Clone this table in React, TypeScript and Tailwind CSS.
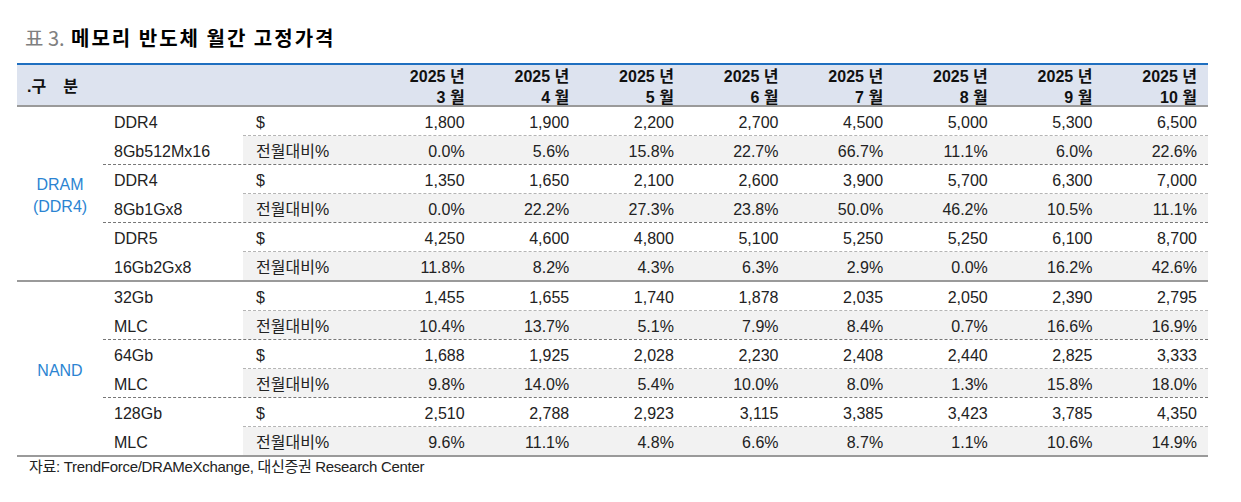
import React from 'react';

type Item = {
  name: [string, string];
  price: string[];
  change: string[];
};

type Category = {
  label: string[];
  items: Item[];
};

const months = ['3', '4', '5', '6', '7', '8', '9', '10'];

const data: Category[] = [
  {
    label: ['DRAM', '(DDR4)'],
    items: [
      {
        name: ['DDR4', '8Gb512Mx16'],
        price: ['1,800', '1,900', '2,200', '2,700', '4,500', '5,000', '5,300', '6,500'],
        change: ['0.0%', '5.6%', '15.8%', '22.7%', '66.7%', '11.1%', '6.0%', '22.6%'],
      },
      {
        name: ['DDR4', '8Gb1Gx8'],
        price: ['1,350', '1,650', '2,100', '2,600', '3,900', '5,700', '6,300', '7,000'],
        change: ['0.0%', '22.2%', '27.3%', '23.8%', '50.0%', '46.2%', '10.5%', '11.1%'],
      },
      {
        name: ['DDR5', '16Gb2Gx8'],
        price: ['4,250', '4,600', '4,800', '5,100', '5,250', '5,250', '6,100', '8,700'],
        change: ['11.8%', '8.2%', '4.3%', '6.3%', '2.9%', '0.0%', '16.2%', '42.6%'],
      },
    ],
  },
  {
    label: ['NAND'],
    items: [
      {
        name: ['32Gb', 'MLC'],
        price: ['1,455', '1,655', '1,740', '1,878', '2,035', '2,050', '2,390', '2,795'],
        change: ['10.4%', '13.7%', '5.1%', '7.9%', '8.4%', '0.7%', '16.6%', '16.9%'],
      },
      {
        name: ['64Gb', 'MLC'],
        price: ['1,688', '1,925', '2,028', '2,230', '2,408', '2,440', '2,825', '3,333'],
        change: ['9.8%', '14.0%', '5.4%', '10.0%', '8.0%', '1.3%', '15.8%', '18.0%'],
      },
      {
        name: ['128Gb', 'MLC'],
        price: ['2,510', '2,788', '2,923', '3,115', '3,385', '3,423', '3,785', '4,350'],
        change: ['9.6%', '11.1%', '4.8%', '6.6%', '8.7%', '1.1%', '10.6%', '14.9%'],
      },
    ],
  },
];

const DataRow = ({ label, values, shaded }: { label: string; values: string[]; shaded?: boolean }) => (
  <div
    className={`grid grid-cols-[128px_repeat(8,1fr)] items-center pt-[3px] ${
      shaded ? 'h-[28px] bg-[#f2f2f2]' : 'h-[29px] border-b border-dashed border-[#b5b5b5]'
    }`}
  >
    <div className="pl-[13px]">{label}</div>
    {values.map((v, i) => (
      <div key={i} className="text-right pr-[11px]">
        {v}
      </div>
    ))}
  </div>
);

export default function App() {
  return (
    <div className="bg-white w-[1241px] h-[502px] pl-[17px] pt-[26px] font-['Liberation_Sans','Noto_Sans_CJK_KR',sans-serif] text-[16px] text-[#222]">
      <div className="pl-[8px] leading-[24px] text-[20px] font-['Noto_Sans_CJK_KR',sans-serif] tracking-[2px]">
        <span className="text-[#808080] tracking-[0px]">표 3.</span>{' '}
        <span className="font-bold text-black">메모리 반도체 월간 고정가격</span>
      </div>

      <div className="mt-[13px] w-[1191px]">
        {/* header */}
        <div className="border-t-2 border-[#1f6fc0] border-b-2 border-b-[#9a9a9a] bg-[#dde3ef] h-[44px] grid grid-cols-[226px_128px_repeat(8,1fr)] font-semibold text-[#111] leading-[21px]">
          <div className="flex items-center pl-[10px]">
            <span>.구</span>
            <span className="ml-[17px]">분</span>
          </div>
          <div />
          {months.map((m) => (
            <div key={m} className="flex flex-col justify-center items-end pr-[11px] pt-[1px]">
              <span>2025 년</span>
              <span>{m} 월</span>
            </div>
          ))}
        </div>

        {data.map((cat, ci) => (
          <div key={ci} className="flex border-b-2 border-[#9a9a9a]">
            <div className="w-[86px] flex flex-col items-center justify-center pt-[4px] text-[#2b84d2] leading-[22px]">
              {cat.label.map((l) => (
                <span key={l}>{l}</span>
              ))}
            </div>
            <div className="flex-1 flex flex-col">
              {cat.items.map((item, ii) => (
                <div
                  key={ii}
                  className={`flex ${ii < cat.items.length - 1 ? 'border-b border-dashed border-[#777]' : ''}`}
                >
                  <div className="w-[140px] pl-[11px] flex flex-col">
                    <div className="h-[29px] flex items-center pt-[3px]">{item.name[0]}</div>
                    <div className="h-[28px] flex items-center pt-[3px]">{item.name[1]}</div>
                  </div>
                  <div className="flex-1 flex flex-col">
                    <DataRow label="$" values={item.price} />
                    <DataRow label="전월대비%" values={item.change} shaded />
                  </div>
                </div>
              ))}
            </div>
          </div>
        ))}

        <div className="pl-[12px] text-[15px] leading-[20px] tracking-[-0.3px]">
          자료: TrendForce/DRAMeXchange, 대신증권 Research Center
        </div>
      </div>
    </div>
  );
}
